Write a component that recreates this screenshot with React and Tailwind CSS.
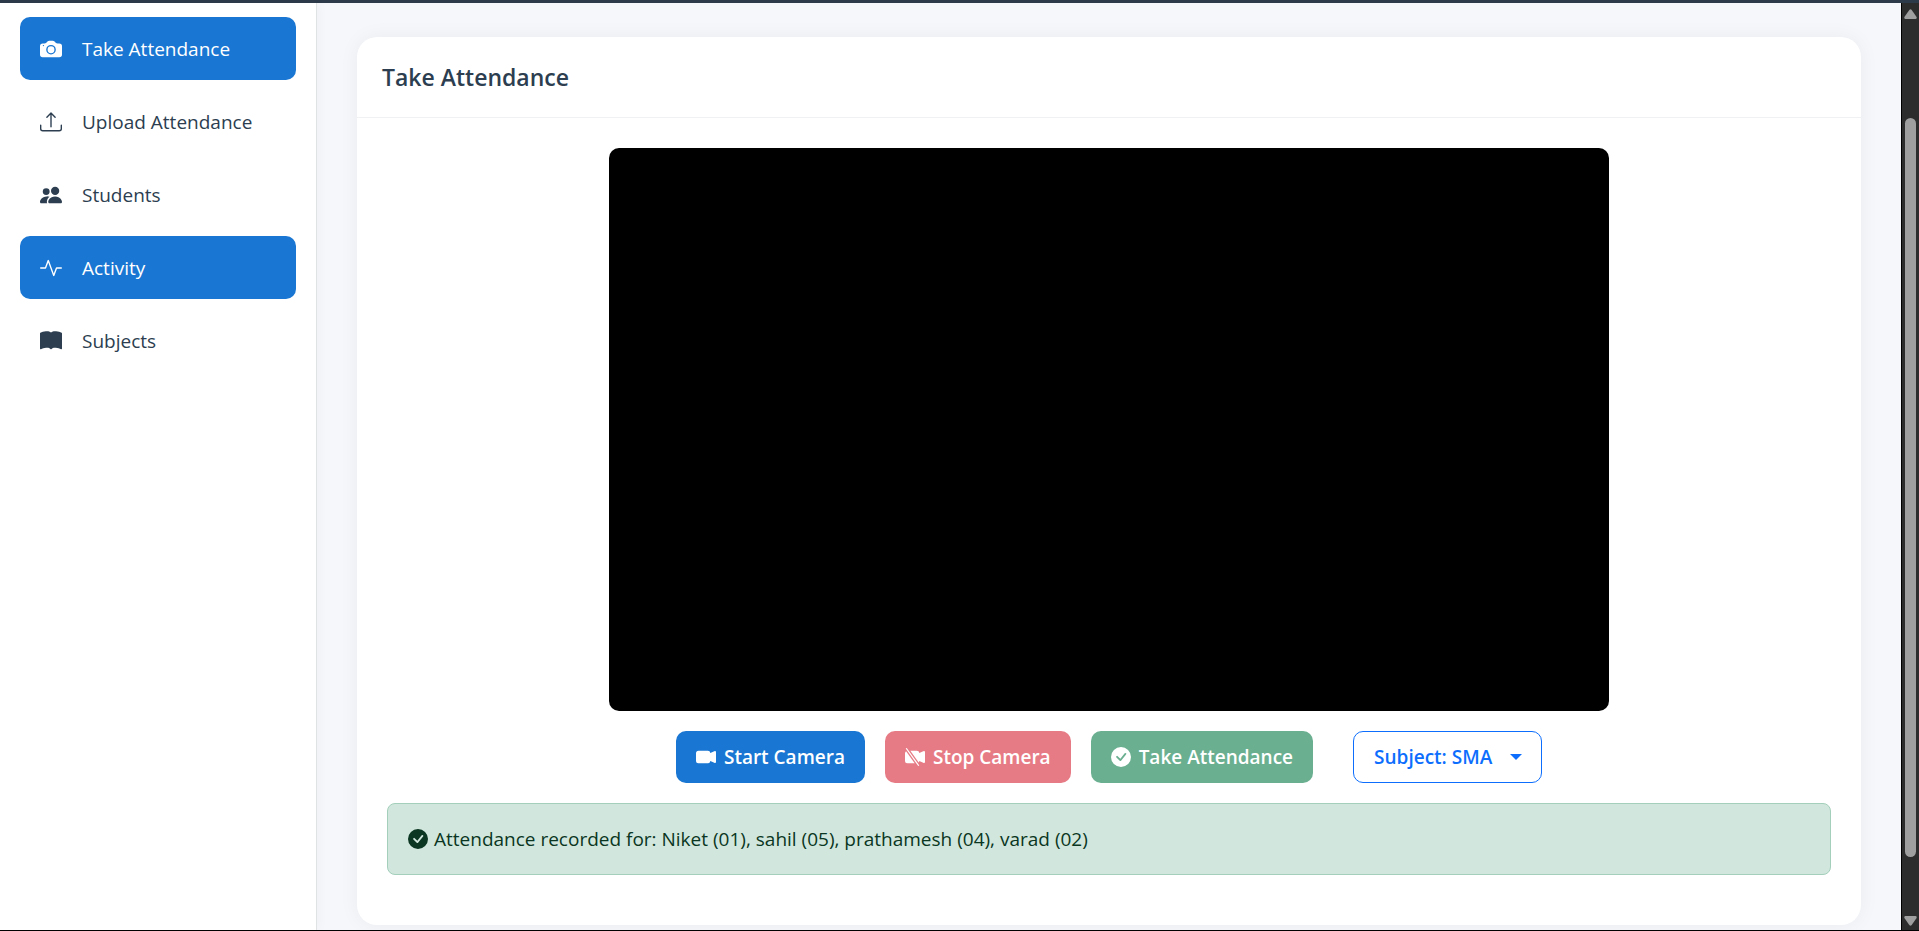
import {
  BsActivity,
  BsBookFill,
  BsCameraFill,
  BsCameraVideoFill,
  BsCameraVideoOffFill,
  BsCheckCircleFill,
  BsPeopleFill,
  BsUpload,
} from "react-icons/bs";

const navItems = [
  { label: "Take Attendance", icon: BsCameraFill, active: true },
  { label: "Upload Attendance", icon: BsUpload, active: false },
  { label: "Students", icon: BsPeopleFill, active: false },
  { label: "Activity", icon: BsActivity, active: true },
  { label: "Subjects", icon: BsBookFill, active: false },
];

function Sidebar() {
  return (
    <nav className="z-10 flex w-[317px] shrink-0 flex-col gap-2.5 border-r border-[#dfe3e4] bg-white px-5 pt-3.5 shadow-[2px_0_10px_rgba(0,0,0,0.03)]">
      {navItems.map(({ label, icon: Icon, active }) => (
        <a
          key={label}
          href="#"
          className={`flex h-[63px] items-center gap-5 rounded-[10px] px-5 ${
            active ? "bg-[#1976d2] text-white" : "text-[#2c3e50]"
          }`}
        >
          <Icon className="size-[22px] shrink-0" aria-hidden="true" />
          <span>{label}</span>
        </a>
      ))}
    </nav>
  );
}

function ActionButton({ icon: Icon, color, disabled, children }) {
  return (
    <button
      type="button"
      disabled={disabled}
      className={`flex h-[52px] items-center gap-2 rounded-[10px] px-5 font-semibold text-white ${color}`}
    >
      <Icon className="size-5 shrink-0" aria-hidden="true" />
      {children}
    </button>
  );
}

function SubjectSelect() {
  return (
    <div className="relative ml-5">
      <select
        aria-label="Subject"
        className="h-[52px] w-[189px] appearance-none rounded-[10px] border border-[#0d6efd] bg-white pl-5 font-semibold text-[#0d6efd]"
      >
        <option>Subject: SMA</option>
      </select>
      <svg
        viewBox="0 0 12 6"
        className="pointer-events-none absolute top-[23px] right-5 h-1.5 w-3 fill-[#0d6efd]"
        aria-hidden="true"
      >
        <path d="M0 0h12L6 6z" />
      </svg>
    </div>
  );
}

function Scrollbar() {
  return (
    <div
      aria-hidden="true"
      className="flex w-[18px] shrink-0 flex-col items-center border-l border-black bg-[#2c2c2c] pt-1.5 pb-1"
    >
      <svg viewBox="0 0 13 10" className="h-2.5 w-[13px] fill-[#9f9f9f]">
        <path d="M5.3 1 Q6.5-.6 7.7 1L12.6 8Q13 10 11.5 10H1.5Q0 10 .4 8z" />
      </svg>
      <div className="flex w-full flex-1 flex-col items-center">
        <div className="h-[99px] shrink-0" />
        <div className="w-[11px] flex-1 rounded-full bg-[#9f9f9f]" />
        <div className="h-[59px] shrink-0" />
      </div>
      <svg viewBox="0 0 13 10" className="h-2.5 w-[13px] fill-[#9f9f9f]">
        <path d="M5.3 9 Q6.5 10.6 7.7 9L12.6 2Q13 0 11.5 0H1.5Q0 0 .4 2z" />
      </svg>
    </div>
  );
}

export default function App() {
  return (
    <div className="flex min-h-screen flex-col border-t-[3px] border-b border-t-[#2c3a4a] border-b-black bg-[#f5f7fb] font-['Open_Sans','Noto_Sans',sans-serif] text-[19px] leading-[30px]">
      <div className="flex flex-1">
        <Sidebar />
        <main className="min-w-0 flex-1 px-10 pt-[34px] pb-[5px]">
          <section className="rounded-[20px] bg-white shadow-[0_0_20px_rgba(0,0,0,0.05)]">
            <header className="flex h-[81px] items-center border-b border-[#f0f1f2] px-[25px]">
              <h1 className="text-[23px] font-semibold text-[#2c3e50]">Take Attendance</h1>
            </header>
            <div className="flex flex-col gap-5 px-[30px] pt-[30px] pb-[50px]">
              <video className="mx-auto aspect-[1000/563] w-full max-w-[1000px] rounded-[10px] bg-black" />
              <div className="flex flex-wrap items-center justify-center gap-5">
                <ActionButton icon={BsCameraVideoFill} color="bg-[#1976d2]">
                  Start Camera
                </ActionButton>
                <ActionButton icon={BsCameraVideoOffFill} color="bg-[#e77b85]" disabled>
                  Stop Camera
                </ActionButton>
                <ActionButton icon={BsCheckCircleFill} color="bg-[#6aaf90]" disabled>
                  Take Attendance
                </ActionButton>
                <SubjectSelect />
              </div>
              <div
                role="status"
                className="flex h-[72px] items-center gap-1.5 rounded-lg border border-[#a3cfbb] bg-[#d1e7dd] px-5 text-[#0a3622]"
              >
                <BsCheckCircleFill className="size-5 shrink-0" aria-hidden="true" />
                Attendance recorded for: Niket (01), sahil (05), prathamesh (04), varad (02)
              </div>
            </div>
          </section>
        </main>
        <Scrollbar />
      </div>
    </div>
  );
}
